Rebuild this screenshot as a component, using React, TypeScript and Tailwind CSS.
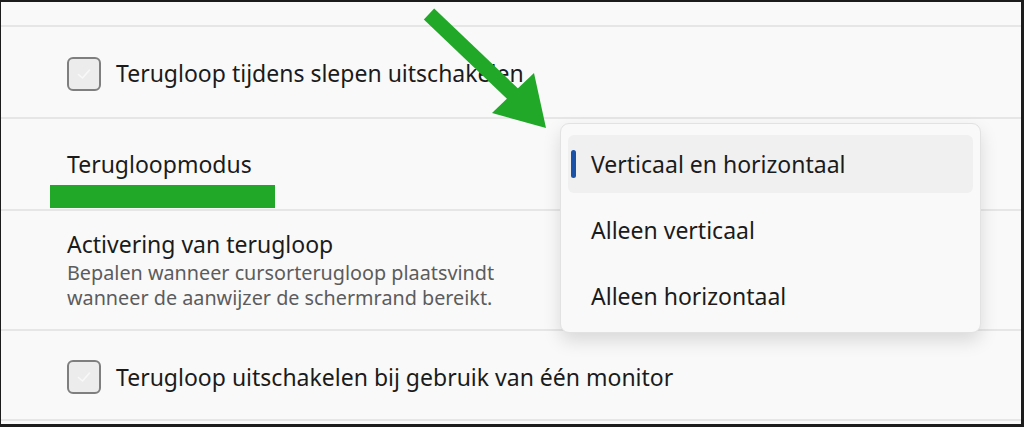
function Checkbox() {
  return (
    <div className="w-[34px] h-[34px] shrink-0 rounded-[6px] border-2 border-[#7f7f7f] bg-[#ececec] flex items-center justify-center">
      <svg width="18" height="18" viewBox="0 0 18 18" fill="none">
        <path d="M3.5 9.5 L7.5 13 L14.5 5" stroke="#f8f8f8" strokeWidth="1.6" strokeLinecap="round" strokeLinejoin="round" />
      </svg>
    </div>
  );
}

const options = ["Verticaal en horizontaal", "Alleen verticaal", "Alleen horizontaal"];

export default function App() {
  return (
    <div
      className="relative w-[1024px] h-[427px] overflow-hidden bg-[#f9f9f9] border-t-2 border-l border-r-[3px] border-b-[3px] border-[#1c1c1c] text-[#1b1b1b]"
      style={{ fontFamily: '"Noto Sans", "Open Sans", sans-serif' }}
    >
      <div className="h-[23px]" />

      <div className="h-[92px] border-t-2 border-[#e6e6e6] flex items-center gap-[15px] pl-[66px] pt-[3px]">
        <Checkbox />
        <span className="text-[23px] leading-none">Terugloop tijdens slepen uitschakelen</span>
      </div>

      <div className="h-[92px] border-t-2 border-[#e6e6e6] flex items-center pl-[66px]">
        <span className="text-[23px] leading-none">Terugloopmodus</span>
      </div>

      <div className="h-[120px] border-t-2 border-[#e6e6e6] pl-[66px] pt-[19px]">
        <div className="text-[23px] leading-[28px]">Activering van terugloop</div>
        <div className="text-[19.8px] leading-[25px] text-[#5c5c5c] mt-[2px]">
          Bepalen wanneer cursorterugloop plaatsvindt
          <br />
          wanneer de aanwijzer de schermrand bereikt.
        </div>
      </div>

      <div className="h-[90px] border-t-2 border-[#e6e6e6] flex items-center gap-[15px] pl-[66px] pt-[4px]">
        <Checkbox />
        <span className="text-[23px] leading-none">Terugloop uitschakelen bij gebruik van één monitor</span>
      </div>
      <div className="h-[2px] bg-[#e6e6e6]" />

      {/* annotation: green underline */}
      <div className="absolute left-[49px] top-[183px] w-[225px] h-[23px] bg-[#21a829]" />

      {/* dropdown */}
      <div className="absolute left-[559px] top-[121px] w-[421px] h-[210px] rounded-[9px] border border-[#e2e2e2] bg-[#f9f9f9] shadow-[0_8px_18px_rgba(0,0,0,0.13)] px-[7px] pt-[11px] flex flex-col gap-[8px]">
        {options.map((o, i) => (
          <div
            key={o}
            className={`relative h-[58px] rounded-[6px] flex items-center pl-[23px] text-[23px] ${i === 0 ? "bg-[#f0f0f0]" : ""}`}
          >
            {i === 0 && <div className="absolute left-[3px] top-[15px] w-[5px] h-[28px] rounded-full bg-[#1a52a8]" />}
            {o}
          </div>
        ))}
      </div>

      {/* annotation: arrow */}
      <svg className="absolute left-0 top-0" width="1024" height="427" viewBox="0 0 1024 427">
        <line x1="428" y1="12" x2="514" y2="94" stroke="#21a829" strokeWidth="15" />
        <polygon points="491,111 533,71 545,126" fill="#21a829" />
      </svg>
    </div>
  );
}
